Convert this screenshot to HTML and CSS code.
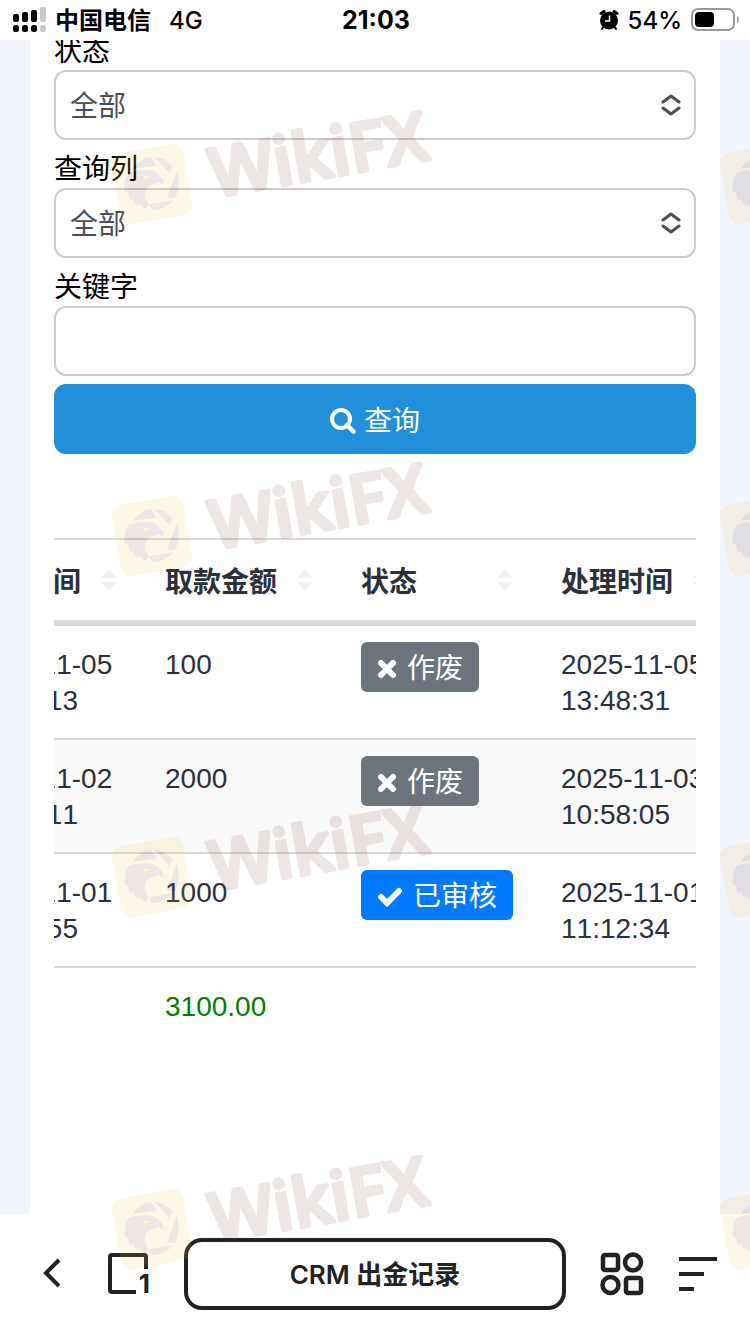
FILE: index.html
```
<!DOCTYPE html>
<html lang="zh-CN">
<head>
    <meta charset="UTF-8">
    <meta name="viewport" content="width=device-width, initial-scale=1.0">
    <title>CRM 出金记录</title>
    <link rel="stylesheet" href="styles.css">
</head>
<body>
    <header class="status-bar">
        <div class="carrier">
            <svg class="signal" width="34" height="26" viewBox="0 0 34 26">
                <g fill="#000">
                    <rect x="0" y="7" width="6" height="8" rx="2"/>
                    <rect x="9" y="5" width="6" height="10" rx="2"/>
                    <rect x="18" y="3" width="6" height="12" rx="2"/>
                    <rect x="0" y="18" width="6" height="7" rx="2.5"/>
                    <rect x="9" y="18" width="6" height="7" rx="2.5"/>
                    <rect x="18" y="18" width="6" height="7" rx="2.5"/>
                </g>
                <g fill="#c8c8c8">
                    <rect x="27" y="0" width="6" height="15" rx="2"/>
                    <rect x="27" y="18" width="6" height="7" rx="2.5"/>
                </g>
            </svg>
            <span class="carrier-name">中国电信</span>
            <span class="network">4G</span>
        </div>
        <div class="clock">21:03</div>
        <div class="power">
            <svg width="20" height="22" viewBox="0 0 20 22">
                <circle cx="10" cy="11.500" r="9"/>
                <path d="M2 4.500 5 2.500M18 4.500 15 2.500" stroke="#000" stroke-width="3" stroke-linecap="round"/>
                <path d="M4 18.500 3 20M16 18.500l1 1.500" stroke="#000" stroke-width="2" stroke-linecap="round"/>
                <path d="M10.500 6.500V12H6" fill="none" stroke="#fff" stroke-width="1.500"/>
            </svg>
            <span>54%</span>
            <svg width="48" height="24" viewBox="0 0 48 24">
                <rect x="1" y="1" width="42" height="21" rx="6" fill="none" stroke="#999" stroke-width="2"/>
                <rect x="4" y="4" width="19" height="15" rx="4"/>
                <path d="M46 8q2 1 2 3.500t-2 3.500z" fill="#999"/>
            </svg>
        </div>
    </header>

    <main class="page" id="page">
        <div class="card">
            <form class="filters">
                <div class="field">
                    <label for="status">状态</label>
                    <div class="select-box">
                        <select id="status"><option>全部</option></select>
                        <svg width="20" height="22" viewBox="0 0 20 22"><path d="M2 8l8-6 8 6M2 14l8 6 8-6"/></svg>
                    </div>
                </div>
                <div class="field">
                    <label for="column">查询列</label>
                    <div class="select-box">
                        <select id="column"><option>全部</option></select>
                        <svg width="20" height="22" viewBox="0 0 20 22"><path d="M2 8l8-6 8 6M2 14l8 6 8-6"/></svg>
                    </div>
                </div>
                <div class="field">
                    <label for="keyword">关键字</label>
                    <input type="text" id="keyword">
                </div>
                <button type="button" class="search">
                    <svg width="26" height="30" viewBox="0 0 26 30"><circle cx="11" cy="15" r="9" fill="none" stroke="#fff" stroke-width="4"/><path d="M17 21l6.500 6.500" stroke="#fff" stroke-width="4.500" stroke-linecap="round"/></svg>
                    查询
                </button>
            </form>

            <div class="table-scroll" id="tableScroll">
                <table>
                    <thead>
                        <tr>
                            <th class="w-normal"><div class="th-inner">申请时间 <i class="sort"></i></div></th>
                            <th class="w-normal"><div class="th-inner">取款金额 <i class="sort"></i></div></th>
                            <th class="w-status"><div class="th-inner">状态 <i class="sort"></i></div></th>
                            <th class="w-normal"><div class="th-inner">处理时间 <i class="sort"></i></div></th>
                        </tr>
                    </thead>
                    <tbody>
                        <tr>
                            <td>2025-11-05 13:45:13</td>
                            <td>100</td>
                            <td class="state"><button type="button" class="badge void"><svg width="20" height="20" viewBox="0 0 20 20"><path d="M4 4l12 12M16 4 4 16" stroke="#fff" stroke-width="6" stroke-linecap="round"/></svg>作废</button></td>
                            <td>2025-11-05 13:48:31</td>
                        </tr>
                        <tr>
                            <td>2025-11-02 10:36:11</td>
                            <td>2000</td>
                            <td class="state"><button type="button" class="badge void"><svg width="20" height="20" viewBox="0 0 20 20"><path d="M4 4l12 12M16 4 4 16" stroke="#fff" stroke-width="6" stroke-linecap="round"/></svg>作废</button></td>
                            <td>2025-11-03 10:58:05</td>
                        </tr>
                        <tr>
                            <td>2025-11-01 10:42:55</td>
                            <td>1000</td>
                            <td class="state"><button type="button" class="badge done"><svg width="26" height="20" viewBox="0 0 26 20"><path d="M4 10l6 6L22 4" fill="none" stroke="#fff" stroke-width="6" stroke-linecap="round"/></svg>已审核</button></td>
                            <td>2025-11-01 11:12:34</td>
                        </tr>
                    </tbody>
                    <tfoot>
                        <tr>
                            <td></td>
                            <td class="total">3100.00</td>
                            <td></td>
                            <td></td>
                        </tr>
                    </tfoot>
                </table>
            </div>
        </div>
    </main>

    <nav class="toolbar">
        <button type="button" aria-label="返回">
            <svg width="32" height="42" viewBox="0 0 32 42"><path d="M17 7 4 20 17 33" stroke-width="4"/></svg>
        </button>
        <button type="button" class="tabs" aria-label="标签页">
            <svg width="42" height="42" viewBox="0 0 42 42"><path d="M28 39H4q-2 0-2-2V4q0-2 2-2h32q2 0 2 2v12" stroke-width="4"/></svg>
            <span>1</span>
        </button>
        <button type="button" class="address">CRM 出金记录</button>
        <button type="button" aria-label="应用">
            <svg width="44" height="44" viewBox="0 0 44 44" stroke-width="4.500"><rect x="3" y="3" width="15" height="15" rx="2"/><circle cx="33" cy="10.500" r="8"/><circle cx="10.500" cy="33" r="8"/><rect x="26" y="26" width="15" height="15" rx="2"/></svg>
        </button>
        <button type="button" aria-label="菜单">
            <svg width="40" height="44" viewBox="0 0 40 44" stroke-width="4"><path d="M1 7h38M1 22h25M1 37h15"/></svg>
        </button>
    </nav>

    <svg class="watermark" aria-hidden="true">
        <defs>
            <g id="logo">
                <rect x="-36" y="-36" width="72" height="72" rx="10" transform="rotate(-10)" fill="#f0c137"/>
                <!-- eagle head inside a shutter ring -->
                <g transform="scale(.3333) translate(-157 -259)" fill="#733f30">
                    <path d="M75 262Q76 236 90 223L136 216Q172 218 181 236Q193 246 192 260Q178 252 164 258Q148 262 138 276Q128 296 146 319L138 333Q124 328 114 312L117 326Q102 316 98 300L95 310Q84 298 84 282L77 284Q74 274 75 262Z"/>
                    <path d="M130 237Q140 234 151 237Q144 244 134 241Z" fill="#f0c137"/>
                    <path d="M100 213Q122 181 153 177L172 204Z"/>
                    <path d="M163 177Q194 178 218 206L209 225Z"/>
                    <path d="M231 221Q247 260 226 301L202 300Z"/>
                    <path d="M148 320L220 308Q192 340 158 336Z"/>
                </g>
            </g>
        </defs>
        <g transform="translate(152 184)"><use href="#logo"/><text x="59" y="24">WikiFX</text></g>
        <g transform="translate(152 536)"><use href="#logo"/><text x="59" y="24">WikiFX</text></g>
        <g transform="translate(152 877)"><use href="#logo"/><text x="59" y="24">WikiFX</text></g>
        <g transform="translate(152 1229)"><use href="#logo"/><text x="59" y="24">WikiFX</text></g>
        <g transform="translate(760 184)"><use href="#logo"/></g>
        <g transform="translate(760 536)"><use href="#logo"/></g>
        <g transform="translate(760 877)"><use href="#logo"/></g>
        <g transform="translate(760 1229)"><use href="#logo"/></g>
    </svg>

    <script>
        document.getElementById('page').scrollTop = 10;
        document.getElementById('tableScroll').scrollLeft = 101;
    </script>
</body>
</html>
```

FILE: styles.css
```
* {
    box-sizing: border-box;
}
body {
    margin: 0;
    height: 100vh;
    display: flex;
    flex-direction: column;
    overflow: hidden;
    background-color: #f2f5ff;
    color: #2b303b;
    font-family: "Liberation Sans", "Noto Sans CJK SC", sans-serif;
    font-size: 28px;
    font-kerning: none;
}
button, input, select {
    font: inherit;
    color: inherit;
}
button {
    padding: 0;
    border: none;
    background: none;
    cursor: pointer;
}

/* status bar */
.status-bar {
    display: grid;
    grid-template-columns: 1fr auto 1fr;
    align-items: center;
    height: 40px;
    padding: 0 11px 0 13px;
    background-color: #fff;
    color: #000;
    font-family: Inter, "Noto Sans CJK SC", sans-serif;
    font-size: 24px;
    font-weight: 500;
}
.carrier, .power {
    display: flex;
    align-items: center;
}
.carrier-name {
    margin: 0 18px 0 8px;
    padding-bottom: 4px;
    font-weight: 700;
}
.clock {
    font-size: 25px;
    font-weight: 700;
}
.power {
    justify-content: flex-end;
    gap: 9px;
}

/* page */
.page {
    flex: 1;
    min-height: 0;
    padding: 0 30px;
    overflow-y: auto;
    scrollbar-width: none;
}
.card {
    min-height: calc(100% + 10px);
    padding: 0 24px;
    background-color: #fff;
}
.field {
    margin-bottom: 8px;
}
.field label {
    display: block;
    padding-top: 4px;
    line-height: 36px;
    color: #000;
}
.field input, .field select {
    display: block;
    width: 100%;
    height: 70px;
    padding: 2px 14px 0;
    border: 2px solid #ccc;
    border-radius: 12px;
    background-color: #fff;
    color: #495057;
    appearance: none;
}
.select-box {
    position: relative;
}
.select-box svg {
    position: absolute;
    right: 15px;
    top: 24px;
    fill: none;
    stroke: #495057;
    stroke-width: 3;
    stroke-linecap: round;
    stroke-linejoin: round;
    pointer-events: none;
}
.search {
    display: flex;
    align-items: center;
    justify-content: center;
    gap: 8px;
    width: 100%;
    height: 70px;
    border-radius: 12px;
    background-color: #218fd9;
    color: #fff;
}

/* table */
.table-scroll {
    margin-top: 84px;
    overflow-x: auto;
    scrollbar-width: none;
}
table {
    width: 788px;
    table-layout: fixed;
    border-collapse: separate;
    border-spacing: 0;
}
.w-normal {
    width: 196px;
}
.w-status {
    width: 200px;
}
th {
    padding: 0;
    border-top: 2px solid #dadada;
    border-bottom: 6px solid #dadada;
    font-weight: 700;
    text-align: left;
}
.th-inner {
    display: flex;
    align-items: center;
    justify-content: space-between;
    height: 80px;
    padding: 0 32px 0 16px;
    white-space: nowrap;
}
.sort::before, .sort::after {
    content: "";
    display: block;
    border: 8px solid transparent;
}
.sort::before {
    border-top: none;
    border-bottom: 9px solid #f1f1f1;
    margin-bottom: 4px;
}
.sort::after {
    border-bottom: none;
    border-top: 9px solid #f1f1f1;
}
td {
    padding: 21px 16px 19px;
    line-height: 36px;
    vertical-align: top;
}
tbody td {
    border-bottom: 2px solid #dadada;
}
tbody tr:nth-child(even) {
    background-color: #fafafa;
}
td.state {
    padding: 16px;
}
.badge {
    display: flex;
    align-items: center;
    gap: 10px;
    height: 50px;
    padding: 4px 16px 0;
    border-radius: 6px;
    color: #fff;
}
.void {
    background-color: #6c757d;
}
.done {
    background-color: #007bff;
}
.total {
    color: #008000;
}

/* browser toolbar */
.toolbar {
    display: flex;
    align-items: center;
    gap: 34px;
    height: 120px;
    padding: 0 32px 0 42px;
    background-color: #fff;
    color: #222;
    font-family: Inter, "Noto Sans CJK SC", sans-serif;
}
.toolbar svg {
    display: block;
    fill: none;
    stroke: #222;
}
.tabs {
    position: relative;
}
.tabs span {
    position: absolute;
    right: 0;
    bottom: -2px;
    font-size: 26px;
    font-weight: 700;
    line-height: 26px;
}
.address {
    flex: 1;
    height: 72px;
    padding-bottom: 4px;
    border: 4px solid #222;
    border-radius: 18px;
    font-size: 26px;
    font-weight: 600;
}

/* watermark */
.watermark {
    position: fixed;
    inset: 0;
    width: 100%;
    height: 100%;
    opacity: 0.13;
    pointer-events: none;
}
.watermark text {
    transform: rotate(-10deg);
    fill: #733f30;
    stroke: #733f30;
    stroke-width: 4px;
    stroke-linejoin: round;
    font-family: "Open Sans", sans-serif;
    font-size: 68px;
    font-weight: 600;
}
```
